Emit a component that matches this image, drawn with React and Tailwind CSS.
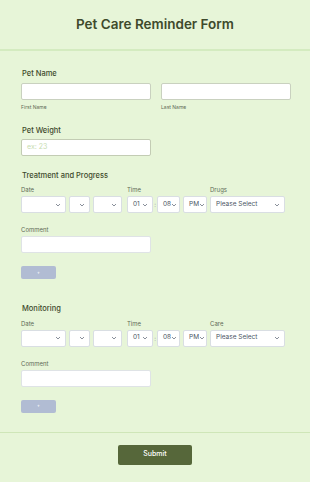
import React from 'react';

const Chevron = () => (
  <svg width="6" height="4" viewBox="0 0 6 4" className="shrink-0">
    <path d="M1 1l2 2 2-2" fill="none" stroke="#6b7280" strokeWidth="0.8" />
  </svg>
);

const Select = ({ w, text }) => (
  <div
    className={`${w} h-[17px] bg-white border border-[#d9dee3] rounded-[2px] flex items-center justify-between pl-[5px] pr-[4px] text-[6.5px] text-[#4b5563]`}
  >
    <span>{text}</span>
    <Chevron />
  </div>
);

const DateTimeRow = ({ third }) => (
  <div>
    <div className="flex text-[6px] text-[#5f6b57] mb-[3px] h-[8px]">
      <span className="w-[106px]">Date</span>
      <span className="w-[83px]">Time</span>
      <span>{third}</span>
    </div>
    <div className="flex items-center">
      <Select w="w-[45px]" text="" />
      <div className="w-[3px]" />
      <Select w="w-[21px]" text="" />
      <div className="w-[3px]" />
      <Select w="w-[29px]" text="" />
      <div className="w-[5px]" />
      <Select w="w-[26px]" text="01" />
      <span className="w-[4px] text-center text-[6px] text-[#9ca3af]">:</span>
      <Select w="w-[23px]" text="08" />
      <div className="w-[3px]" />
      <Select w="w-[24px]" text="PM" />
      <div className="w-[3px]" />
      <Select w="w-[75px]" text="Please Select" />
    </div>
  </div>
);

const Comment = () => (
  <div>
    <div className="text-[6px] text-[#5f6b57] mt-[12px] mb-[3px] h-[8px]">Comment</div>
    <div className="w-[130px] h-[17px] bg-white border border-[#dfe3e6] rounded-[2px]" />
    <div className="mt-[13px] w-[35px] h-[13px] bg-[#b1bcd3] rounded-[2px] flex items-center justify-center text-white text-[5px]">
      +
    </div>
  </div>
);

export default function App() {
  return (
    <div
      className="w-[310px] h-[482px] bg-[#e7f5d8] overflow-hidden"
      style={{ fontFamily: 'Inter, "Noto Sans", sans-serif' }}
    >
      <div className="h-[51px] flex items-center justify-center border-b-2 border-[#d4ebc0]">
        <h1 className="text-[13.5px] font-semibold text-[#3e4a2c]">Pet Care Reminder Form</h1>
      </div>

      <div className="px-[21px] pt-[17px]">
        <div className="text-[7.5px] font-medium text-[#3e4a2c] ml-[1px]">Pet Name</div>
        <div className="flex gap-[10px] mt-[4px]">
          <div>
            <div className="w-[130px] h-[17px] bg-white border border-[#c9d1bf] rounded-[2px]" />
            <div className="text-[5px] text-[#5f6b57] mt-[4px]">First Name</div>
          </div>
          <div>
            <div className="w-[130px] h-[17px] bg-white border border-[#c9d1bf] rounded-[2px]" />
            <div className="text-[5px] text-[#5f6b57] mt-[4px]">Last Name</div>
          </div>
        </div>

        <div className="text-[7.5px] font-medium text-[#3e4a2c] ml-[1px] mt-[13px]">Pet Weight</div>
        <div className="w-[130px] h-[17px] bg-white border border-[#c3ccb4] rounded-[2px] mt-[3px] flex items-center px-[5px] text-[7px] text-[#c7dcb0]">
          ex: 23
        </div>

        <div className="text-[7.5px] font-medium text-[#3e4a2c] ml-[1px] mt-[14px] mb-[4px]">Treatment and Progress</div>
        <DateTimeRow third="Drugs" />
        <Comment />

        <div className="text-[7.5px] font-medium text-[#3e4a2c] ml-[1px] mt-[24px] mb-[4px]">Monitoring</div>
        <DateTimeRow third="Care" />
        <Comment />
      </div>

      <div className="mt-[19px] border-t border-[#cfe6b8] flex justify-center pt-[12px]">
        <div className="w-[74px] h-[20px] bg-[#56673a] rounded-[2px] flex items-center justify-center text-white text-[7px] font-medium">
          Submit
        </div>
      </div>
    </div>
  );
}
